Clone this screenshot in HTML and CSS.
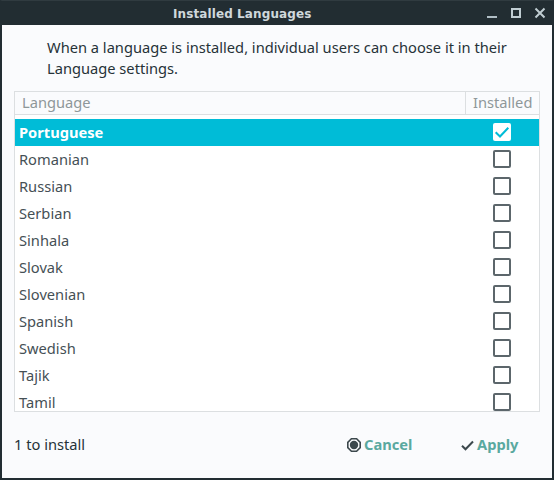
FILE: index.html
```html
<!DOCTYPE html>
<html lang="en">
<head>
<meta charset="utf-8">
<title>Installed Languages</title>
<link rel="stylesheet" href="styles.css">
</head>
<body>
<div class="window">
  <header class="titlebar">
    <h1 class="title">Installed Languages</h1>
    <svg class="controls" width="60" height="12" viewBox="0 0 60 12">
      <path class="bar" d="M0 9h10v2H0z"/>
      <path class="line" d="M25 2h8v8h-8z"/>
      <path class="line" d="M48.5 1.5l9 9M57.5 1.5l-9 9"/>
    </svg>
  </header>
  <main class="content">
    <p class="intro">When a language is installed, individual users can choose it in their<br>Language settings.</p>
    <section class="table">
      <div class="head"><span class="lang">Language</span><span class="inst">Installed</span></div>
      <div class="rows">
        <div class="row selected"><span>Portuguese</span><span class="box"><svg width="18" height="18" viewBox="0 0 18 18"><path d="M2.7 9.2l4.3 4.3L15.3 4.8"/></svg></span></div>
        <div class="row"><span>Romanian</span><span class="box"></span></div>
        <div class="row"><span>Russian</span><span class="box"></span></div>
        <div class="row"><span>Serbian</span><span class="box"></span></div>
        <div class="row"><span>Sinhala</span><span class="box"></span></div>
        <div class="row"><span>Slovak</span><span class="box"></span></div>
        <div class="row"><span>Slovenian</span><span class="box"></span></div>
        <div class="row"><span>Spanish</span><span class="box"></span></div>
        <div class="row"><span>Swedish</span><span class="box"></span></div>
        <div class="row"><span>Tajik</span><span class="box"></span></div>
        <div class="row"><span>Tamil</span><span class="box"></span></div>
      </div>
    </section>
    <footer class="footer">
      <span class="status">1 to install</span>
      <span class="button cancel"><svg width="14" height="14" viewBox="0 0 14 14"><path class="ring" d="M4.4.8h5.2l3.6 3.6v5.2l-3.6 3.6H4.4L.8 9.6V4.4z"/><circle class="dot" cx="7" cy="7" r="4.2"/></svg>Cancel</span>
      <span class="button apply"><svg width="13" height="14" viewBox="0 0 13 14"><path class="tick" d="M1 7.8l3.5 3.5L12 3.5"/></svg>Apply</span>
    </footer>
  </main>
</div>
</body>
</html>
```
FILE: styles.css
```css
* { box-sizing: border-box; }
body { margin: 0; font: 11pt/21px "Noto Sans", sans-serif; color: #263238; }
.window { width: 554px; height: 480px; background: #222d32; border: 2px solid #222d32; border-top: 1px solid #303b40; overflow: hidden; }
.titlebar { height: 24px; display: flex; align-items: center; justify-content: space-between; padding: 0 5px 0 171px; }
.title { margin: 0; font: bold 12px/24px "DejaVu Sans", sans-serif; letter-spacing: 0.1px; padding-top: 1px; color: #cfd8dc; }
.controls { display: block; }
.controls .bar { fill: #b0bec5; }
.controls .line { fill: none; stroke: #c0cdd2; stroke-width: 2; }
.content { height: 453px; background: #fafbfd; padding: 12px 12px 0; }
.intro { margin: 0 0 12px 33px; height: 42px; white-space: nowrap; }
.table { height: 321px; border: 1px solid #dcdfe1; overflow: hidden; background: #fff; }
.head { height: 23px; display: flex; background: #fafbfd; border-bottom: 1px solid #dcdfe1; color: #8e9799; line-height: 21px; }
.lang { flex: 1; padding-left: 7px; border-right: 1px solid #dcdfe1; }
.inst { width: 73px; padding-left: 7px; }
.rows { padding-top: 4px; }
.row { height: 27px; display: flex; align-items: center; justify-content: space-between; padding: 0 28px 1px 4px; color: #455055; }
.selected { background: #00bcd7; color: #fff; font-weight: bold; }
.box { width: 18px; height: 18px; border: 2px solid #5c666b; border-radius: 2px; background: #fff; }
.selected .box { border: 0; }
.box svg { display: block; fill: none; stroke: #00bcd7; stroke-width: 2; }
.footer { display: flex; align-items: center; height: 65px; }
.status { width: 333px; }
.button { display: flex; align-items: center; gap: 3px; font-weight: bold; color: #5aa9a0; }
.cancel { width: 114px; }
.button svg { fill: none; stroke: #3c484d; }
.ring { stroke-width: 1.6; }
.dot { fill: #3c484d; stroke: none; }
.tick { stroke-width: 2; }
```
